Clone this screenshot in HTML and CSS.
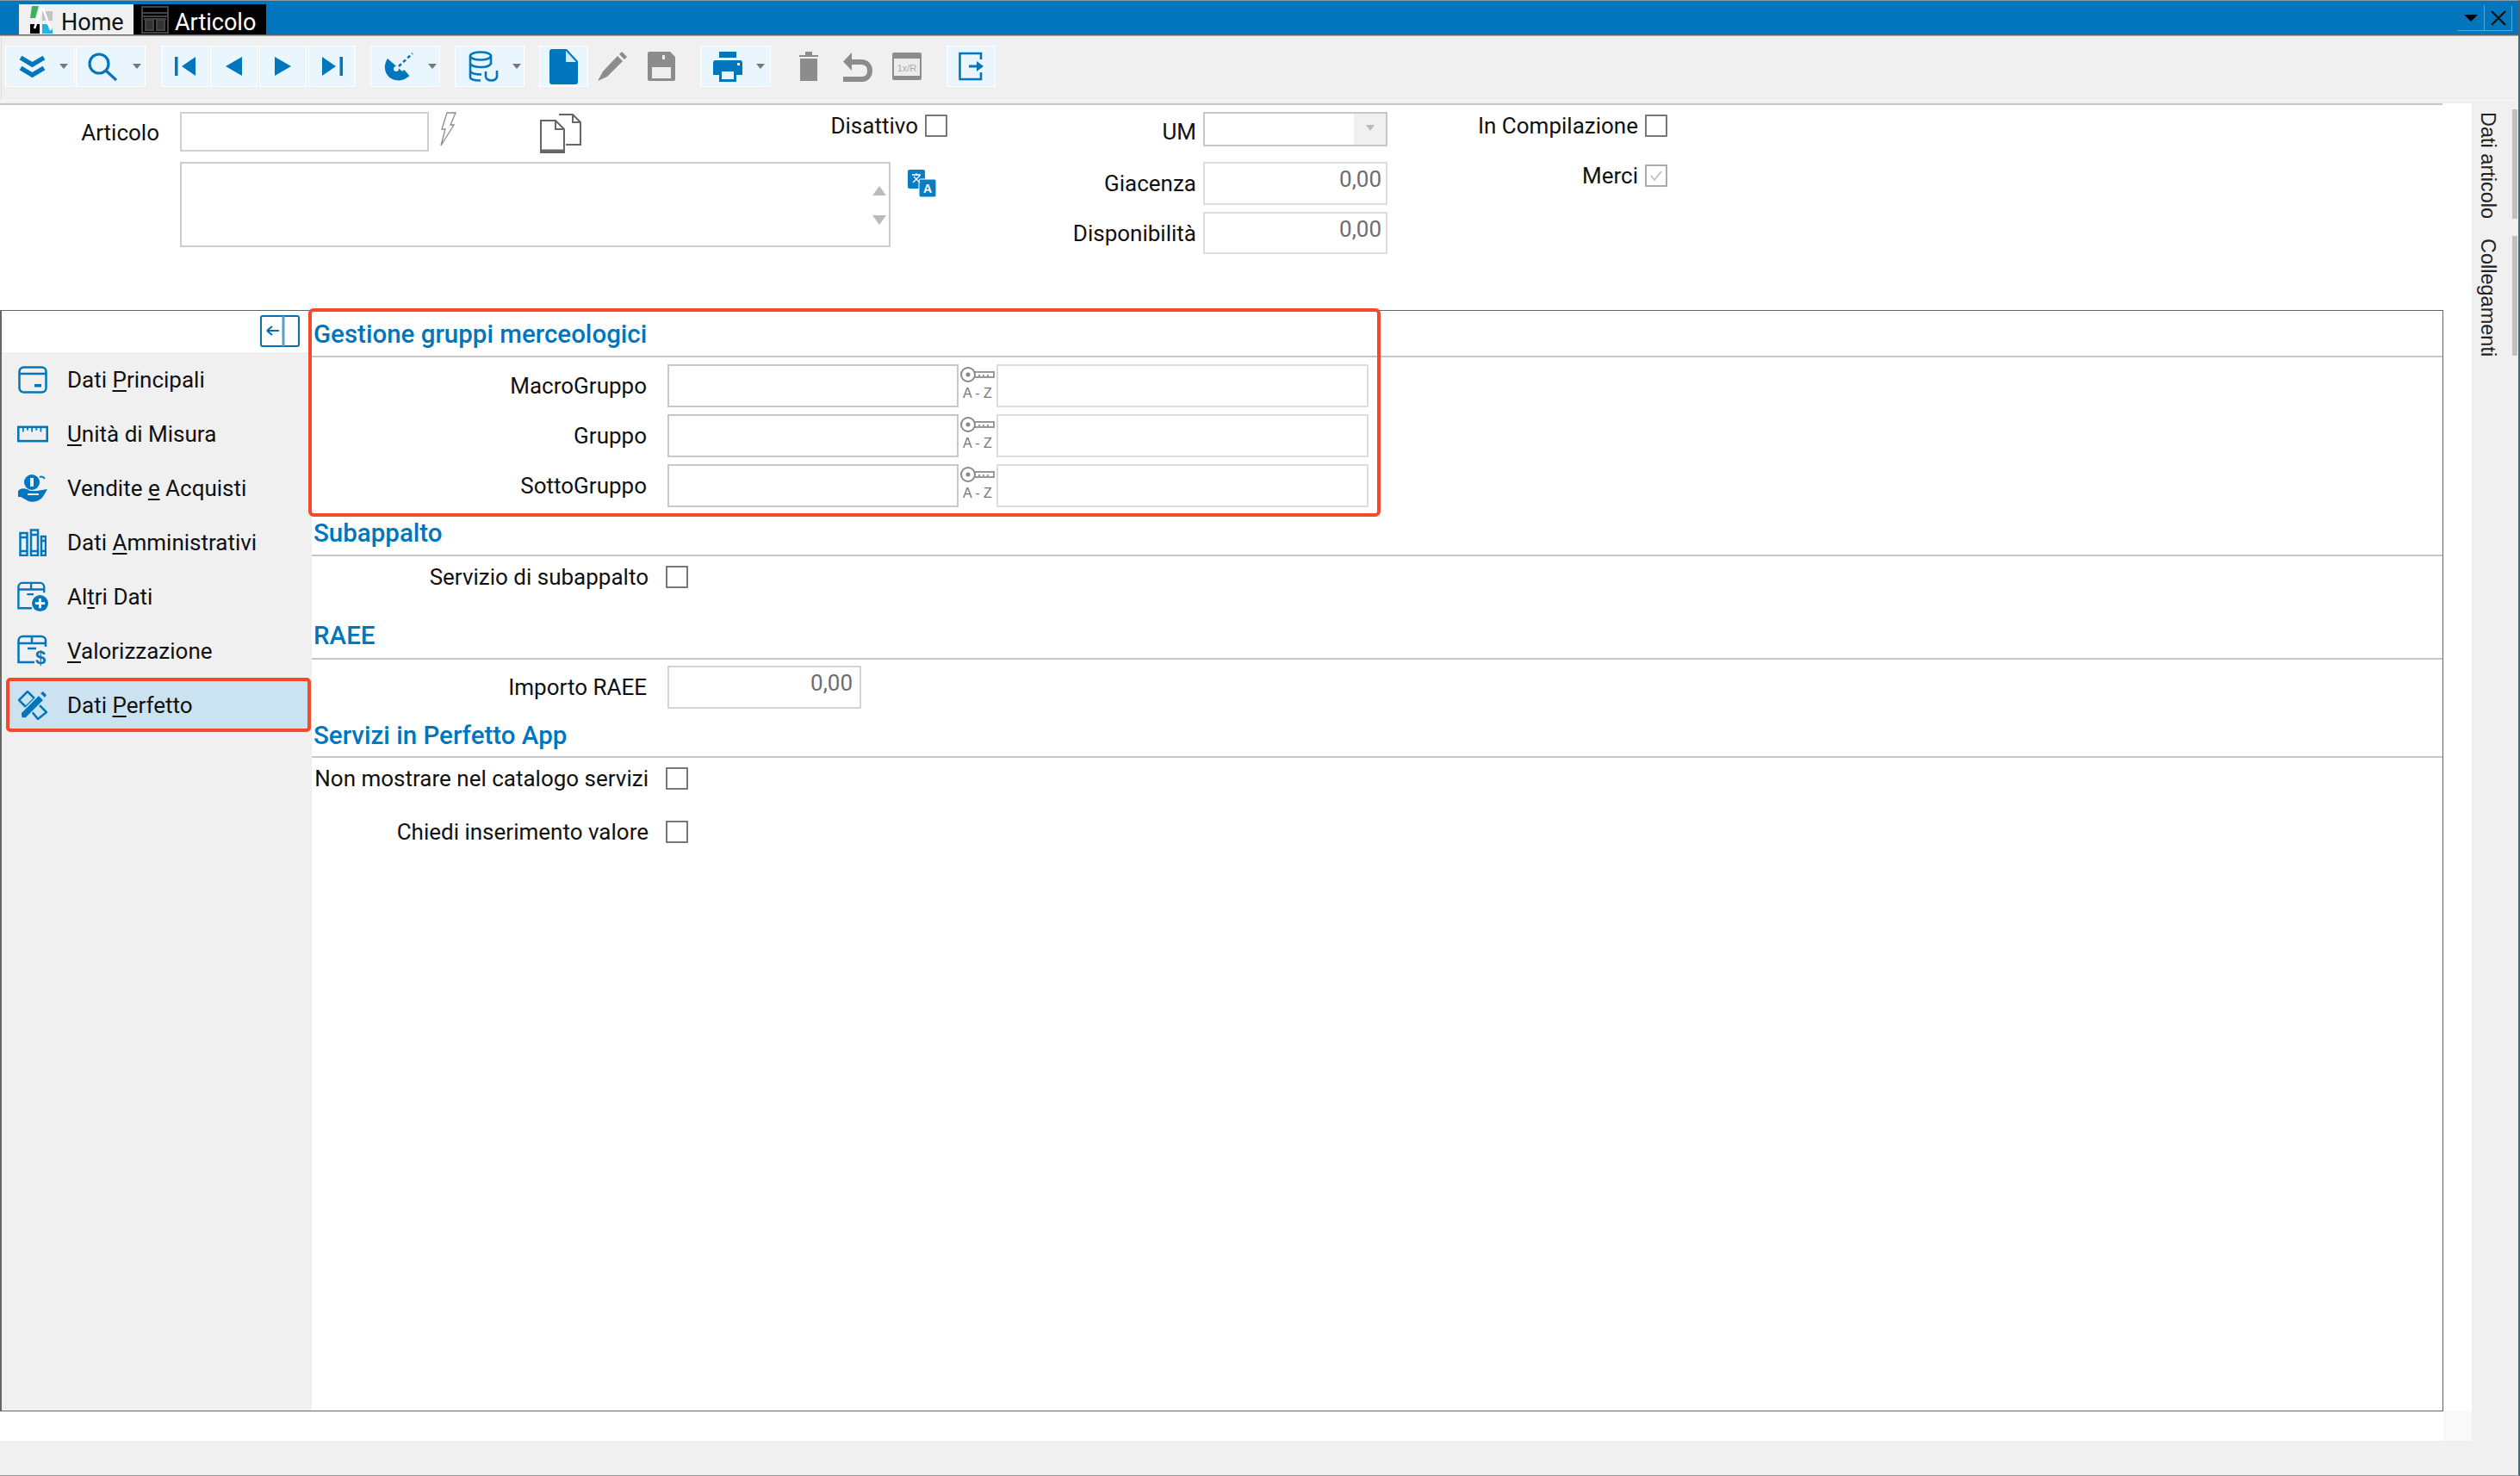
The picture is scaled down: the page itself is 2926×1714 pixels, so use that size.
FILE: index.html
```html
<!DOCTYPE html>
<html lang="it">
<head>
<meta charset="utf-8">
<title>Articolo</title>
<link rel="stylesheet" href="styles.css">
</head>
<body>
<div class="window">
  <header class="titlebar">
    <div class="tab tab-home">
      <svg class="tab-icon" width="26" height="32" viewBox="0 0 26 32"><polygon points="2,0 10,0 6,14 0,14" fill="#3fae5f"/><rect x="14" y="6" width="12" height="11" fill="#c4c4c4"/><rect x="0" y="21" width="11" height="11" fill="#000"/><polygon points="14,21 19,21 26,27 26,32 14,32" fill="#20b4e8"/><path d="M5 26 L13 3 L15 3 L24 28" fill="none" stroke="#fff" stroke-width="2.5"/></svg>
      <span class="tab-text">Home</span>
    </div>
    <div class="tab tab-active">
      <svg class="tab-icon" width="32" height="32" viewBox="0 0 32 32" fill="none" stroke="#444" stroke-width="2"><rect x="1" y="1" width="30" height="30"/><path d="M1 8H31M1 12H31"/><rect x="5" y="16" width="9" height="12" fill="#333"/><rect x="18" y="16" width="9" height="12" fill="#333"/><path d="M3 15H29"/></svg>
      <span class="tab-text">Articolo</span>
    </div>
    <div class="win-controls">
      <div class="win-btn"><svg width="16" height="8" viewBox="0 0 16 8"><polygon points="0,0 16,0 8,8"/></svg></div>
      <div class="win-btn win-close"><svg width="18" height="18" viewBox="0 0 18 18"><path d="M1 1L17 17M17 1L1 17" stroke="#111" stroke-width="2.4"/></svg></div>
    </div>
  </header>

  <div class="toolbar">
    <div class="toolbar-inner">
      <div class="tb tb-drop w81"><svg width="31" height="26" viewBox="0 0 31 26" fill="none" stroke="#0176bc" stroke-width="5.5"><path d="M2 3L15.5 11L29 3"/><path d="M2 15L15.5 23L29 15"/></svg><i class="caret"></i></div>
      <div class="tb tb-drop tb-search w81 ml1"><svg width="34" height="33" viewBox="0 0 34 33" fill="none" stroke="#0176bc" stroke-width="3.2"><circle cx="13" cy="13" r="11"/><path d="M21 21L33 32"/></svg><i class="caret"></i></div>
      <div class="tb w55 ml18"><svg width="24" height="22" viewBox="0 0 24 22" fill="#0176bc"><rect width="3.5" height="22"/><polygon points="24,0 24,22 8,11"/></svg></div>
      <div class="tb w55 ml2"><svg width="19" height="22" viewBox="0 0 19 22" fill="#0176bc"><polygon points="19,0 19,22 0,11"/></svg></div>
      <div class="tb w55 ml2"><svg width="19" height="22" viewBox="0 0 19 22" fill="#0176bc"><polygon points="0,0 0,22 19,11"/></svg></div>
      <div class="tb w55 ml2"><svg width="24" height="22" viewBox="0 0 24 22" fill="#0176bc"><polygon points="0,0 0,22 16,11"/><rect x="20.5" width="3.5" height="22"/></svg></div>
      <div class="tb tb-drop w81 ml17"><svg width="35" height="33" viewBox="0 0 35 33"><path d="M4 7C-2 16 1 27 10 31C17 34 24 32 28 28Z" fill="#0176bc"/><circle cx="14" cy="19" r="3" fill="#eaf6fe"/><path d="M22 21C25 24 27 26 28 28" stroke="#0176bc" stroke-width="3" fill="none"/><path d="M17 16L33 1" stroke="#0176bc" stroke-width="2.5" stroke-dasharray="4 3" fill="none"/></svg><i class="caret"></i></div>
      <div class="tb tb-drop w81 ml17"><svg width="35" height="36" viewBox="0 0 35 36" fill="none" stroke="#0176bc" stroke-width="2.6"><ellipse cx="14" cy="6" rx="12" ry="4.5"/><path d="M2 6V31C2 33 6 34.5 14 34.5M26 6V16M2 15C4 18 10 19 15 19C20 19 24 18 26 15M2 24C4 27 8 27.5 15 27.5"/><path d="M20 24V30A6.5 4.5 0 0 0 33 30V23"/></svg><i class="caret"></i></div>
      <div class="tb w57 ml17"><svg width="33" height="41" viewBox="0 0 33 41"><path d="M0 3A3 3 0 0 1 3 0H20L33 14V38A3 3 0 0 1 30 41H3A3 3 0 0 1 0 38Z" fill="#0176bc"/><path d="M19 2L31 15H19Z" fill="#d6e9f6"/></svg></div>
      <div class="plain ml10 w35"><svg width="35" height="36" viewBox="0 0 35 36" fill="#8c8c8c"><polygon points="7,24 24,6 30,12 12,30 1,35"/><polygon points="26,4 29,1 35,7 32,10"/></svg></div>
      <div class="plain ml24 w32"><svg width="32" height="34" viewBox="0 0 32 34"><path d="M2 0H26L32 6V32A2 2 0 0 1 30 34H2A2 2 0 0 1 0 32V2A2 2 0 0 1 2 0Z" fill="#8c8c8c"/><rect x="5" y="18" width="22" height="13" fill="#eee"/><rect x="8" y="1" width="15" height="10" fill="#8c8c8c"/><rect x="17" y="4" width="3" height="5" fill="#eee"/></svg></div>
      <div class="tb tb-print ml29"><svg width="34" height="35" viewBox="0 0 34 35" fill="#0176bc"><rect x="7" width="20" height="7"/><path d="M3 10H31A3 3 0 0 1 34 13V27H27V23H7V27H0V13A3 3 0 0 1 3 10Z"/><rect x="7" y="23" width="20" height="12"/><rect x="10" y="23" width="14" height="9" fill="#eaf6fe"/><rect x="28" y="13" width="3" height="3" fill="#eaf6fe"/></svg><i class="caret"></i></div>
      <div class="plain ml33 w22"><svg width="22" height="34" viewBox="0 0 22 34" fill="#8c8c8c"><rect x="1" y="8" width="20" height="26"/><rect y="4" width="22" height="2"/><rect x="7" y="0" width="8" height="4"/></svg></div>
      <div class="plain ml29 w34"><svg width="34" height="35" viewBox="0 0 34 35" fill="none" stroke="#8c8c8c" stroke-width="6"><path d="M0 32H22C28 32 31 27 31 22C31 16 27 12 21 12H6"/><polygon points="10,1 10,22 0,11.5" fill="#8c8c8c" stroke="none"/></svg></div>
      <div class="plain ml23 w34"><svg width="34" height="32" viewBox="0 0 34 32"><rect width="34" height="32" rx="2" fill="#8c8c8c"/><rect x="2" y="7" width="30" height="20" fill="#ececec"/><text x="17" y="22" text-anchor="middle" class="calc-text">1x/R</text></svg></div>
      <div class="tb w57 ml29"><svg width="29" height="34" viewBox="0 0 29 34" fill="none" stroke="#0176bc" stroke-width="2.6"><path d="M26 9V2H1.500V32H26V24"/><path d="M12 17H27" stroke-width="3"/><polygon points="21,11 29,17 21,23" fill="#0176bc" stroke="none"/></svg></div>
    </div>
  </div>

  <div class="body">
    <main class="workspace">
      <section class="head-form">
        <div class="group-a">
          <div class="row-article">
            <label class="lbl lbl-article">Articolo</label>
            <div class="field field-code"></div>
            <svg class="bolt" width="20" height="40" viewBox="0 0 20 40" fill="none" stroke="#8a8a8a" stroke-width="1.300"><path d="M9 1H19L13 15L17 15L2 39L7 20H3Z"/></svg>
            <svg class="copy" width="48" height="46" viewBox="0 0 48 46" fill="none" stroke="#666" stroke-width="2"><path d="M22 1H38L47 10V36H30"/><path d="M38 1V10H47"/><path d="M1 8H18L28 18V45H1Z" fill="#fff"/><path d="M1 43H28" stroke-width="3"/><path d="M18 8V18H28"/></svg>
            <div class="check-pair pair-dis"><span class="lbl">Disattivo</span><i class="check"></i></div>
          </div>
          <div class="row-desc">
            <div class="field field-desc"><i class="arrow-up"></i><i class="arrow-down"></i></div>
            <svg class="translate" width="33" height="32" viewBox="0 0 33 32"><rect width="20" height="22" rx="2" fill="#0a7cc4"/><rect x="13" y="11" width="20" height="21" rx="2" fill="#0a7cc4" stroke="#fff" stroke-width="1"/><path d="M5 6H15M10 4V7M6 15L14 7M7 8L14 15" stroke="#fff" stroke-width="1.400" fill="none"/><text x="23" y="27" text-anchor="middle" class="tr-text">A</text></svg>
          </div>
        </div>
        <div class="group-b">
          <div class="row-b row-um"><span class="lbl lbl-b lbl-um">UM</span><div class="field field-b field-select"><span class="select-btn"><i class="arrow-down-sm"></i></span></div></div>
          <div class="row-b row-gia"><span class="lbl lbl-b">Giacenza</span><div class="field field-b field-soft num">0,00</div></div>
          <div class="row-b row-dis"><span class="lbl lbl-b">Disponibilità</span><div class="field field-b field-soft num">0,00</div></div>
        </div>
        <div class="group-c">
          <div class="check-pair"><span class="lbl lbl-c">In Compilazione</span><i class="check"></i></div>
          <div class="check-pair pair-merci"><span class="lbl lbl-c">Merci</span><i class="check check-on"><svg width="18" height="16" viewBox="0 0 18 16" fill="none" stroke="#bbb" stroke-width="1.600"><path d="M3 8L7 13L15 3"/></svg></i></div>
        </div>
      </section>

      <section class="panel">
        <nav class="sidebar">
          <div class="side-top">
            <svg width="46" height="37" viewBox="0 0 46 37" fill="none" stroke="#0a6fb0" stroke-width="2"><rect x="1" y="1" width="44" height="35" rx="2"/><path d="M27 1V36" stroke-width="3" stroke="#5f9cc6"/><path d="M8 18H22M8 18L14 13M8 18L14 23" stroke-width="2.200"/></svg>
          </div>
          <div class="side-list">
            <a class="side-item"><span class="side-icon"><svg width="34" height="32" viewBox="0 0 34 32" fill="none" stroke="#0176bc" stroke-width="2.500"><rect x="1.500" y="1.500" width="31" height="29" rx="5"/><path d="M1.500 9H32.500"/><rect x="19" y="21" width="8" height="3.500" fill="#0176bc" stroke="none"/></svg></span><span>Dati <u>P</u>rincipali</span></a>
            <a class="side-item"><span class="side-icon"><svg width="42" height="22" viewBox="0 0 42 22" fill="none" stroke="#0176bc" stroke-width="3"><rect x="1.500" y="1.500" width="39" height="19"/><path d="M8 2V8M14 2V6M20 2V8M26 2V6M32 2V8" stroke-width="2"/></svg></span><span><u>U</u>nità di Misura</span></a>
            <a class="side-item"><span class="side-icon"><svg width="34" height="34" viewBox="0 0 34 34" fill="#0176bc"><circle cx="16" cy="10" r="9"/><rect x="14" y="5" width="4" height="10" fill="#f0f0f0"/><path d="M25 4A5 5 0 0 1 31 6" stroke="#0176bc" stroke-width="2" fill="none"/><path d="M0 20C4 16 9 17 14 20H22L34 18L30 25C26 32 18 34 12 32L3 27H0Z"/><path d="M11 24H24" stroke="#f0f0f0" stroke-width="2"/></svg></span><span>Vendite <u>e</u> Acquisti</span></a>
            <a class="side-item"><span class="side-icon"><svg width="32" height="32" viewBox="0 0 32 32" fill="none" stroke="#0176bc" stroke-width="2.500"><rect x="1.500" y="5" width="8" height="26"/><rect x="14" y="1.500" width="8" height="29.500"/><rect x="26" y="9" width="5" height="22"/><path d="M1 10H10M1 26H10M13 7H23M13 26H23M26 14H32M26 26H32"/></svg></span><span>Dati <u>A</u>mministrativi</span></a>
            <a class="side-item"><span class="side-icon"><svg width="38" height="38" viewBox="0 0 38 38" fill="none" stroke="#0176bc" stroke-width="2.500"><path d="M18 33H1.500V7A5 5 0 0 1 6 2H28A5 5 0 0 1 33 7V14M1.500 10H33M17 2V10M12 16H20"/><circle cx="28" cy="27" r="10" fill="#0176bc" stroke="none"/><path d="M22 27H34M28 21V33" stroke="#fff" stroke-width="3"/></svg></span><span>Al<u>t</u>ri Dati</span></a>
            <a class="side-item"><span class="side-icon"><svg width="36" height="38" viewBox="0 0 36 38" fill="none" stroke="#0176bc" stroke-width="2.500"><path d="M20 32H1.500V7A5 5 0 0 1 6 2H28A5 5 0 0 1 33 7V14M1.500 10H33M17 2V10M12 16H22"/><text x="27" y="34" text-anchor="middle" class="dollar">$</text></svg></span><span><u>V</u>alorizzazione</span></a>
            <a class="side-item side-active"><span class="side-icon"><svg width="34" height="34" viewBox="0 0 34 34" fill="none" stroke="#0176bc" stroke-width="2.500"><path d="M1 11L11 1L19 9L9 19ZM15 23L23 15L33 25L23 33Z"/><path d="M4 32L3 26L24 5L30 11L9 32Z" fill="#0176bc" stroke="#cbe2f1" stroke-width="1.500"/><path d="M26 3L29 1L33 5L31 8Z" fill="#0176bc" stroke="none"/></svg></span><span>Dati <u>P</u>erfetto</span></a>
          </div>
        </nav>

        <div class="content">
          <div class="highlight"></div>
          <h2 class="sec-title sec-first">Gestione gruppi merceologici</h2>
          <div class="lookup-rows">
            <div class="lookup">
              <span class="lbl lbl-form">MacroGruppo</span>
              <div class="field f-code"></div>
              <svg class="key" width="44" height="50" viewBox="0 0 44 50"><circle cx="11" cy="12" r="8" fill="none" stroke="#888" stroke-width="2"/><circle cx="11" cy="12" r="2.500" fill="#888"/><path d="M19 9H41V15H19M24 15V12M29 15V12M34 15V12" fill="none" stroke="#999" stroke-width="2"/><text x="22" y="39" text-anchor="middle" class="key-text">A - Z</text></svg>
              <div class="field f-desc"></div>
            </div>
            <div class="lookup">
              <span class="lbl lbl-form">Gruppo</span>
              <div class="field f-code"></div>
              <svg class="key" width="44" height="50" viewBox="0 0 44 50"><circle cx="11" cy="12" r="8" fill="none" stroke="#888" stroke-width="2"/><circle cx="11" cy="12" r="2.500" fill="#888"/><path d="M19 9H41V15H19M24 15V12M29 15V12M34 15V12" fill="none" stroke="#999" stroke-width="2"/><text x="22" y="39" text-anchor="middle" class="key-text">A - Z</text></svg>
              <div class="field f-desc"></div>
            </div>
            <div class="lookup">
              <span class="lbl lbl-form">SottoGruppo</span>
              <div class="field f-code"></div>
              <svg class="key" width="44" height="50" viewBox="0 0 44 50"><circle cx="11" cy="12" r="8" fill="none" stroke="#888" stroke-width="2"/><circle cx="11" cy="12" r="2.500" fill="#888"/><path d="M19 9H41V15H19M24 15V12M29 15V12M34 15V12" fill="none" stroke="#999" stroke-width="2"/><text x="22" y="39" text-anchor="middle" class="key-text">A - Z</text></svg>
              <div class="field f-desc"></div>
            </div>
          </div>

          <h2 class="sec-title sec-sub">Subappalto</h2>
          <div class="form-row row-sub"><span class="lbl lbl-check">Servizio di subappalto</span><i class="check"></i></div>

          <h2 class="sec-title sec-raee">RAEE</h2>
          <div class="form-row row-raee"><span class="lbl lbl-form">Importo RAEE</span><div class="field field-soft num f-amount">0,00</div></div>

          <h2 class="sec-title sec-app">Servizi in Perfetto App</h2>
          <div class="form-row row-app1"><span class="lbl lbl-check">Non mostrare nel catalogo servizi</span><i class="check"></i></div>
          <div class="form-row row-app2"><span class="lbl lbl-check">Chiedi inserimento valore</span><i class="check"></i></div>
        </div>
      </section>

      <div class="foot"><div class="foot-corner"></div></div>
    </main>

    <aside class="rail">
      <div class="rail-tab">Dati articolo</div>
      <div class="rail-tab rail-tab2">Collegamenti</div>
    </aside>
  </div>
</div>
</body>
</html>
```
FILE: styles.css
```css
* { box-sizing: border-box; }
html, body { margin: 0; padding: 0; background: #f0f0f0; }
body { font-family: Roboto, "Liberation Sans", sans-serif; font-size: 26px; color: #111; }
.window { width: 2926px; height: 1714px; display: flex; flex-direction: column; border-top: 1px solid #8c9aa3; border-right: 2px solid #4a6572; border-bottom: 1px solid #999; overflow: hidden; }

/* title bar */
.titlebar { height: 40px; background: #0176bc; border-bottom: 1px solid #666; display: flex; align-items: flex-end; padding-left: 22px; flex: none; }
.tab { height: 35px; display: flex; align-items: center; font-size: 27px; }
.tab-text { padding-top: 8px; line-height: 27px; }
.tab-home { width: 133px; background: #f0f0f0; color: #111; padding-left: 13px; gap: 10px; }
.tab-active { width: 154px; background: #000; color: #fff; padding-left: 9px; gap: 7px; }
.tab-icon { flex: none; }
.win-controls { margin-left: auto; margin-right: 7px; display: flex; align-self: flex-start; margin-top: 5px; }
.win-btn { width: 32px; height: 30px; border-bottom: 1px solid #4fa8de; border-right: 1px solid #4fa8de; display: flex; align-items: center; justify-content: center; }
.win-close { border-top: 1px solid #0176bc; }

/* toolbar */
.toolbar { height: 79px; flex: none; background: #f0f0f0; border-top: 1px solid #aaa; padding: 0 3px 3px 1px; }
.toolbar-inner { height: 75px; border-bottom: 1px solid #fafafa; border-left: 1px solid #ddd; padding: 11px 0 0 4px; display: flex; align-items: flex-start; }
.tb { height: 48px; background: #eaf6fe; border: 1px solid #fff; display: flex; align-items: center; justify-content: center; flex: none; }
.tb-drop { justify-content: flex-start; padding-left: 15px; position: relative; }
.tb-search { padding-left: 13px; }
.tb-search .caret { margin-left: 18px; }
.tb-print { width: 82px; padding-left: 14px; justify-content: flex-start; }
.plain { height: 48px; display: flex; align-items: center; justify-content: center; flex: none; }
.caret { width: 0; height: 0; border-left: 5px solid transparent; border-right: 5px solid transparent; border-top: 6px solid #777; margin-left: 16px; }
.w81 { width: 81px; } .w55 { width: 55px; } .w57 { width: 57px; } .w35 { width: 35px; } .w32 { width: 32px; } .w22 { width: 22px; } .w34 { width: 34px; }
.ml1 { margin-left: 1px; } .ml2 { margin-left: 2px; } .ml10 { margin-left: 10px; } .ml17 { margin-left: 17px; } .ml18 { margin-left: 18px; } .ml23 { margin-left: 23px; } .ml24 { margin-left: 24px; } .ml29 { margin-left: 29px; } .ml33 { margin-left: 33px; }
.calc-text { font-family: "Liberation Sans", sans-serif; font-size: 11px; fill: #aaa; }

/* body */
.body { flex: 1; display: flex; min-height: 0; }
.workspace { width: 2870px; margin-bottom: 40px; background: #fff; display: flex; flex-direction: column; flex: none; }
.rail { flex: 1; background: #f0f0f0; padding-top: 7px; display: flex; flex-direction: column; gap: 20px; }
.rail-tab { writing-mode: vertical-rl; white-space: nowrap; font-family: "Liberation Sans", sans-serif; font-size: 23.5px; color: #222; width: 53px; border-right: 6px solid #c0c0c0; height: 127px; padding: 3px 13px 0 0; line-height: 30px; flex: none; }
.rail-tab2 { height: 139px; padding-top: 3px; }

/* header form */
.head-form { width: 2836px; height: 240px; flex: none; border-top: 2px solid #c8c8c8; padding-top: 8px; display: flex; align-items: flex-start; }
.lbl { color: #111; white-space: nowrap; }
.field { border: 1px solid #c4c4c4; background: #fff; flex: none; }
.field-soft { border: 2px solid #ddd; }
.group-a { width: 1100px; flex: none; }
.row-article { display: flex; align-items: flex-start; height: 46px; }
.lbl-article { width: 185px; text-align: right; line-height: 48px; }
.field-code { width: 289px; height: 46px; margin-left: 24px; border: 2px solid #d0d0d0; }
.bolt { margin-left: 12px; flex: none; }
.copy { margin-left: 97px; margin-top: 2px; flex: none; }
.check-pair { display: flex; align-items: center; gap: 8px; height: 26px; line-height: 26px; }
.pair-dis { margin-left: auto; margin-top: 3px; }
.check { width: 26px; height: 26px; border: 2px solid #777; background: #fff; display: inline-flex; align-items: center; justify-content: center; flex: none; border-radius: 1px; }
.check-on { border-color: #aaa; }
.row-desc { margin-top: 12px; display: flex; align-items: flex-start; }
.field-desc { width: 825px; height: 99px; margin-left: 209px; border: 2px solid #ccc; display: flex; flex-direction: column; align-items: flex-end; padding: 26px 3px 0 0; }
.arrow-up { width: 0; height: 0; border-left: 8px solid transparent; border-right: 8px solid transparent; border-bottom: 11px solid #bbb; }
.arrow-down { width: 0; height: 0; border-left: 8px solid transparent; border-right: 8px solid transparent; border-top: 11px solid #bbb; margin-top: 23px; }
.translate { margin-left: 20px; margin-top: 9px; flex: none; }
.tr-text { font-family: "Liberation Sans", sans-serif; font-size: 14px; font-weight: 700; fill: #fff; }

.group-b { margin-left: 109px; flex: none; width: 402px; }
.row-b { display: flex; align-items: center; gap: 8px; }
.lbl-b { width: 180px; text-align: right; }
.lbl-um { padding-top: 6px; }
.field-b { width: 214px; }
.row-um { height: 40px; }
.row-gia { height: 50px; margin-top: 18px; }
.row-dis { height: 49px; margin-top: 8px; }
.field-select { height: 40px; border: 2px solid #c8c8c8; display: flex; justify-content: flex-end; }
.select-btn { width: 37px; background: #f0f0f0; display: flex; align-items: flex-start; justify-content: center; padding-top: 13px; }
.arrow-down-sm { width: 0; height: 0; border-left: 5px solid transparent; border-right: 5px solid transparent; border-top: 7px solid #bbb; }
.row-gia .field, .row-dis .field { height: 100%; }
.num { color: #6e6e6e; text-align: right; padding: 0 5px 0 0; line-height: 36px; }

.group-c { margin-left: 91px; flex: none; padding-top: 3px; }
.lbl-c { width: 200px; text-align: right; }
.pair-merci { margin-top: 32px; }

/* panel */
.panel { width: 2837px; flex: 1; min-height: 0; border: 1px solid #666; border-left-width: 2px; display: flex; background: #fff; }
.sidebar { width: 360px; flex: none; display: flex; flex-direction: column; }
.side-top { height: 48px; display: flex; justify-content: flex-end; align-items: flex-start; padding: 5px 14px 0 0; }
.side-list { flex: 1; background: #f0f0f0; display: flex; flex-direction: column; }
.side-item { height: 63px; display: flex; align-items: center; padding-left: 18px; gap: 22px; color: #111; flex: none; }
.side-icon { width: 36px; display: flex; justify-content: center; flex: none; }
.side-active { background: #cbe2f1; border: 4px solid #f4492a; border-radius: 5px; margin-left: 5px; margin-right: 1px; padding-left: 9px; }
.dollar { font-family: "Liberation Sans", sans-serif; font-size: 22px; font-weight: 700; fill: #0176bc; stroke: none; }

.content { flex: 1; position: relative; min-width: 0; }
.highlight { position: absolute; left: -4px; top: -3px; width: 1245px; height: 242px; border: 4px solid #f4492a; border-radius: 6px; pointer-events: none; }
.sec-title { margin: 0; height: 52px; border-bottom: 2px solid #c8c8c8; color: #0176bc; font-size: 29.5px; font-weight: 500; padding-left: 2px; line-height: 50px; }
.sec-first { height: 54px; line-height: 54px; }
.sec-sub { margin-top: 5px; }
.sec-raee { margin-top: 30px; height: 53px; }
.sec-app { margin-top: 5px; line-height: 52px; }
.lookup-rows { padding-top: 8px; display: flex; flex-direction: column; gap: 8px; }
.lookup { display: flex; align-items: center; height: 50px; }
.lbl-form { width: 389px; text-align: right; margin-right: 24px; flex: none; }
.f-code { width: 338px; height: 100%; border: 2px solid #c8c8c8; }
.key { flex: none; }
.key-text { font-family: "Liberation Sans", sans-serif; font-size: 16px; fill: #777; }
.f-desc { width: 432px; height: 100%; border: 2px solid #ddd; }
.form-row { display: flex; align-items: center; }
.lbl-check { width: 391px; text-align: right; margin-right: 20px; flex: none; }
.row-sub { margin-top: 11px; height: 26px; }
.row-raee { margin-top: 7px; height: 50px; }
.f-amount { width: 225px; height: 100%; border-color: #d4d4d4; padding-right: 8px; }
.row-app1 { margin-top: 11px; height: 26px; }
.row-app2 { margin-top: 36px; height: 26px; }
.foot { height: 34px; flex: none; display: flex; justify-content: flex-end; }
.foot-corner { width: 33px; background: #f9f9f9; }
u { text-underline-offset: 3px; }
```
